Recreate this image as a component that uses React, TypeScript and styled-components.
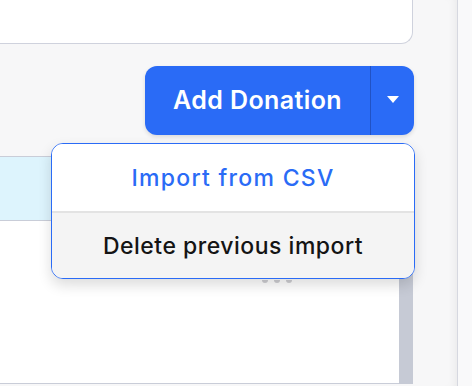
import styled, { createGlobalStyle } from "styled-components";

const GlobalStyle = createGlobalStyle`
  html, body {
    margin: 0;
    padding: 0;
    background: #f7f7f8;
  }
  body {
    font-family: Inter, "Noto Sans", sans-serif;
  }
`;

export default function App() {
  return (
    <>
      <GlobalStyle />
      <Page>
        <Main>
          <TopCard />
          <Toolbar>
            <SplitButton>
              <MainAction>Add Donation</MainAction>
              <CaretAction aria-label="More actions">
                <svg width="12" height="7" viewBox="0 0 12 7">
                  <path d="M0 0 L12 0 L6 7 Z" fill="#fff" />
                </svg>
              </CaretAction>
            </SplitButton>
            <Menu>
              <MenuItem $primary>Import from CSV</MenuItem>
              <MenuItem>Delete previous import</MenuItem>
            </Menu>
          </Toolbar>
          <Table>
            <Rows>
              <HighlightRow />
              <BodyRow>
                <Dots>
                  <Dot />
                  <Dot />
                  <Dot />
                </Dots>
              </BodyRow>
            </Rows>
            <Scrollbar />
          </Table>
        </Main>
        <Gutter />
        <SidePanel />
      </Page>
    </>
  );
}

const Page = styled.div`
  display: flex;
  height: 386px;
  overflow: hidden;
`;

const Main = styled.div`
  width: 414px;
  display: flex;
  flex-direction: column;
  position: relative;
`;

const TopCard = styled.div`
  height: 44px;
  width: 413px;
  box-sizing: border-box;
  background: #fff;
  border: 1px solid #cfd2dd;
  border-top: none;
  border-left: none;
  border-radius: 0 0 12px 0;
`;

const Toolbar = styled.div`
  display: flex;
  justify-content: flex-end;
  padding-top: 22px;
  position: relative;
`;

const SplitButton = styled.div`
  display: flex;
  height: 69px;
  border-radius: 12px;
  background: #2a6bf6;
  box-shadow: 0 2px 4px rgba(0, 0, 0, 0.12);
  overflow: hidden;
`;

const MainAction = styled.button`
  width: 226px;
  border: none;
  background: transparent;
  color: #fff;
  font-family: inherit;
  font-size: 25px;
  font-weight: 600;
  letter-spacing: 0.4px;
  padding: 0 0 2px 0;
  border-right: 1px solid #2152c4;
  cursor: pointer;
`;

const CaretAction = styled.button`
  width: 43px;
  border: none;
  background: transparent;
  display: flex;
  align-items: center;
  justify-content: center;
  padding: 0 0 3px 0;
  cursor: pointer;
`;

const Menu = styled.div`
  position: absolute;
  top: 99px;
  left: 51px;
  width: 362px;
  z-index: 2;
  background: #fff;
  border: 1px solid #2a6bf6;
  border-radius: 12px;
  overflow: hidden;
  box-shadow: 0 6px 14px rgba(0, 0, 0, 0.14);
`;

const MenuItem = styled.div<{ $primary?: boolean }>`
  height: ${({ $primary }) => ($primary ? "67px" : "65px")};
  display: flex;
  align-items: center;
  justify-content: center;
  font-size: 23px;
  font-weight: 500;
  letter-spacing: ${({ $primary }) => ($primary ? "1.3px" : "0.5px")};
  color: ${({ $primary }) => ($primary ? "#2a6bf6" : "#141414")};
  background: ${({ $primary }) => ($primary ? "#fff" : "#f4f4f4")};
  border-bottom: ${({ $primary }) => ($primary ? "2px solid #e3e3e3" : "none")};
`;

const Table = styled.div`
  display: flex;
  margin-top: 21px;
  height: 228px;
`;

const Rows = styled.div`
  width: 399px;
  display: flex;
  flex-direction: column;
  background: #fff;
  border-bottom: 1px solid #c9cdd8;
`;

const HighlightRow = styled.div`
  height: 63px;
  background: #ddf4fd;
  border-top: 1px solid #c9cdd8;
  border-bottom: 1px solid #c9cdd8;
`;

const BodyRow = styled.div`
  flex: 1;
  display: flex;
  padding: 59px 0 0 262px;
`;

const Dots = styled.div`
  display: flex;
  gap: 6px;
  height: 4px;
`;

const Dot = styled.span`
  width: 6px;
  height: 3px;
  background: #cfcfd3;
  border-radius: 0 0 3px 3px;
`;

const Scrollbar = styled.div`
  width: 14px;
  background: #c6cad5;
`;

const Gutter = styled.div`
  width: 43px;
  background: #f7f7f8;
  box-shadow: inset -8px 0 8px -6px rgba(0, 0, 0, 0.06);
`;

const SidePanel = styled.div`
  flex: 1;
  background: #f9f9fa;
  border-left: 1px solid #d6d8e0;
`;
